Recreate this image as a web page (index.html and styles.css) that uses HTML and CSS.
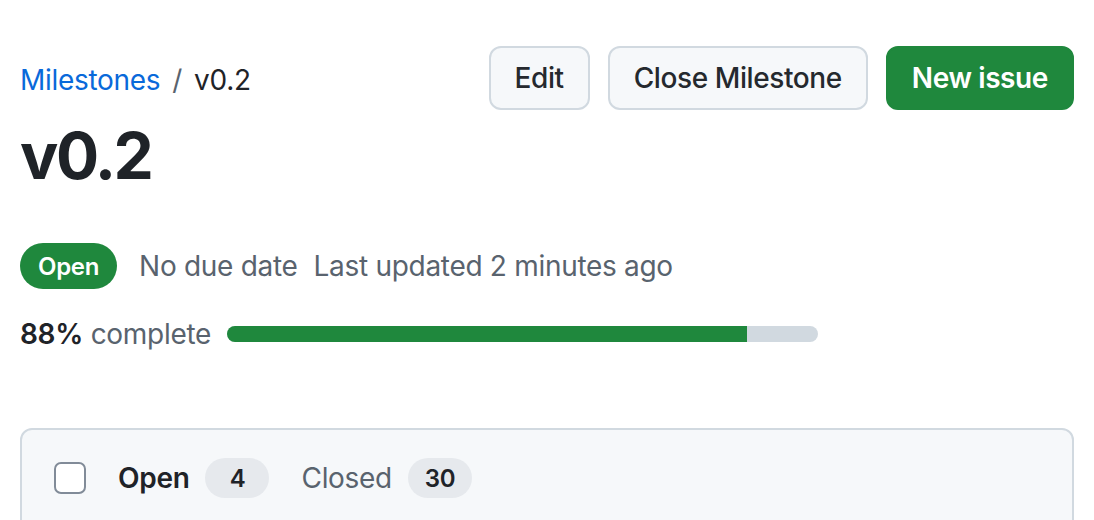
FILE: index.html
```html
<!DOCTYPE html>
<html lang="en">
<head>
<meta charset="utf-8">
<title>v0.2 · Milestone</title>
<link rel="stylesheet" href="styles.css">
</head>
<body>
<div class="page">
  <div class="header">
    <nav class="crumbs"><a href="#" class="crumb-link">Milestones</a><span class="sep">/</span><span class="crumb-cur">v0.2</span></nav>
    <div class="actions">
      <button class="btn">Edit</button>
      <button class="btn">Close Milestone</button>
      <button class="btn btn-primary">New issue</button>
    </div>
  </div>
  <h1 class="title">v0.2</h1>
  <div class="meta">
    <span class="state">Open</span>
    <span class="muted">No due date</span>
    <span class="muted">Last updated 2 minutes ago</span>
  </div>
  <div class="progress-row">
    <span class="pct"><strong>88%</strong> <span class="muted">complete</span></span>
    <div class="bar"><span class="fill" style="width: 88%"></span></div>
  </div>
  <div class="box">
    <div class="box-head">
      <span class="check"></span>
      <span class="tab tab-active">Open</span>
      <span class="counter">4</span>
      <span class="tab tab-muted">Closed</span>
      <span class="counter">30</span>
    </div>
  </div>
</div>
</body>
</html>
```
FILE: styles.css
```css
* { box-sizing: border-box; }
html, body { margin: 0; padding: 0; background: #ffffff; }
body {
  font-family: Inter, "Liberation Sans", sans-serif;
  color: #1f2328;
  font-size: 28px;
  letter-spacing: -0.3px;
}
.page { padding: 46px 20px 0 20px; }
.header {
  display: flex;
  align-items: center;
  justify-content: space-between;
}
.crumbs { display: flex; align-items: center; font-size: 28px; padding-top: 4px; }
.crumb-link { color: #0969da; text-decoration: none; }
.sep { color: #59636e; margin: 0 12px; }
.crumb-cur { color: #1f2328; }
.actions { display: flex; gap: 18px; }
.btn {
  height: 64px;
  padding: 0 24px;
  border: 2px solid #d1d9e0;
  border-radius: 12px;
  background: #f6f8fa;
  color: #25292e;
  font-family: inherit;
  font-size: 28px;
  font-weight: 500;
  letter-spacing: -0.4px;
}
.btn-primary {
  background: #1f883d;
  border-color: #1f883d;
  color: #ffffff;
  font-weight: 600;
}
.title {
  margin: 6px 0 0 0;
  font-size: 64px;
  font-weight: 700;
  line-height: 80px;
  letter-spacing: -2.5px;
}
.meta {
  display: flex;
  align-items: center;
  gap: 22px;
  margin-top: 47px;
}
.meta .muted + .muted { margin-left: -6px; }
.state {
  display: inline-flex;
  align-items: center;
  height: 46px;
  padding: 0 18px;
  border-radius: 23px;
  background: #1f883d;
  color: #ffffff;
  font-size: 24px;
  font-weight: 600;
}
.muted { color: #59636e; }
.progress-row {
  display: flex;
  align-items: center;
  gap: 16px;
  margin-top: 28px;
}
.pct strong { font-weight: 600; color: #1f2328; }
.bar {
  width: 591px;
  height: 16px;
  border-radius: 8px;
  background: #d1d9e0;
  overflow: hidden;
  display: flex;
}
.fill { display: block; height: 100%; background: #1f883d; }
.box {
  margin-top: 77px;
  border: 2px solid #d1d9e0;
  border-radius: 12px;
  background: #f6f8fa;
  height: 140px;
}
.box-head {
  display: flex;
  align-items: center;
  padding: 28px 32px;
}
.check {
  width: 32px;
  height: 32px;
  border: 2px solid #818b98;
  border-radius: 7px;
  background: #ffffff;
  margin-right: 32px;
}
.tab { font-size: 28px; }
.tab-active { font-weight: 600; color: #1f2328; }
.tab-muted { color: #59636e; margin-left: 32px; }
.counter {
  display: inline-flex;
  align-items: center;
  justify-content: center;
  height: 40px;
  min-width: 64px;
  padding: 0 12px;
  margin-left: 16px;
  border-radius: 20px;
  background: #e6e9ed;
  color: #1f2328;
  font-size: 24px;
  font-weight: 600;
}
```
